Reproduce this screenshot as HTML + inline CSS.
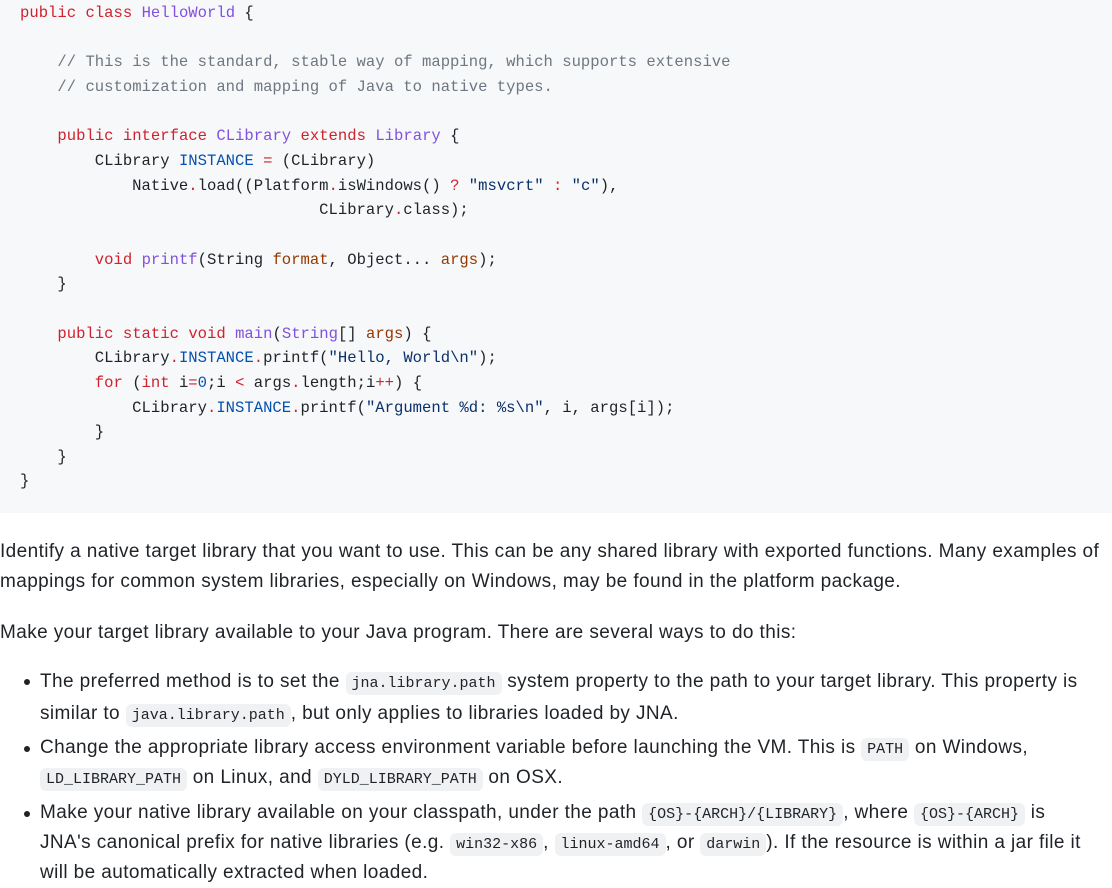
<!DOCTYPE html>
<html><head><meta charset="utf-8"><style>
html,body{margin:0;padding:0;background:#fff;width:1112px;height:887px;overflow:hidden}
body{font-family:"Liberation Sans",sans-serif;color:#1f2328;font-size:19px;letter-spacing:0.4px}
pre{margin:0;background:#f6f8fa;height:513px;padding:1px 0 0 20px;box-sizing:border-box;font-family:"Liberation Mono",monospace;font-size:15.58px;line-height:24.65px;color:#1f2328;letter-spacing:0}
.k{color:#cf222e}.c{color:#6e7781}.e{color:#8250df}.b{color:#0550ae}.o{color:#953800}.s{color:#0a3069}
p{margin:0;line-height:30px;white-space:nowrap}
ul{margin:0;padding:0;list-style:none}
li{position:relative;padding-left:40px;white-space:nowrap;line-height:31px}
li:before{content:"";position:absolute;left:24px;top:13px;width:6px;height:6px;border-radius:50%;background:#1f2328}
code{font-family:"Liberation Mono",monospace;font-size:15px;letter-spacing:0;line-height:1;background:rgba(175,184,193,0.2);border-radius:6px;padding:3px 6px}
</style></head><body>
<pre><span class="k">public</span> <span class="k">class</span> <span class="e">HelloWorld</span> {

    <span class="c">// This is the standard, stable way of mapping, which supports extensive</span>
    <span class="c">// customization and mapping of Java to native types.</span>

    <span class="k">public</span> <span class="k">interface</span> <span class="e">CLibrary</span> <span class="k">extends</span> <span class="e">Library</span> {
        CLibrary <span class="b">INSTANCE</span> <span class="k">=</span> (CLibrary)
            Native<span class="k">.</span>load((Platform<span class="k">.</span>isWindows() <span class="k">?</span> <span class="s">"msvcrt"</span> <span class="k">:</span> <span class="s">"c"</span>),
                                CLibrary<span class="k">.</span>class);

        <span class="k">void</span> <span class="e">printf</span>(String <span class="o">format</span>, Object... <span class="o">args</span>);
    }

    <span class="k">public</span> <span class="k">static</span> <span class="k">void</span> <span class="e">main</span>(<span class="e">String</span>[] <span class="o">args</span>) {
        CLibrary<span class="k">.</span><span class="b">INSTANCE</span><span class="k">.</span>printf(<span class="s">"Hello, World\n"</span>);
        <span class="k">for</span> (<span class="k">int</span> i<span class="k">=</span><span class="b">0</span>;i <span class="k">&lt;</span> args<span class="k">.</span>length;i<span class="k">++</span>) {
            CLibrary<span class="k">.</span><span class="b">INSTANCE</span><span class="k">.</span>printf(<span class="s">"Argument %d: %s\n"</span>, i, args[i]);
        }
    }
}</pre>
<div style="position:absolute;top:537px;left:0;width:1112px">
<p>Identify a native target library that you want to use. This can be any shared library with exported functions. Many examples of<br>mappings for common system libraries, especially on Windows, may be found in the platform package.</p>
<p style="margin-top:21px">Make your target library available to your Java program. There are several ways to do this:</p>
<ul style="margin-top:19px">
<li style="line-height:32px;margin-top:-1px">The preferred method is to set the <code>jna.library.path</code> system property to the path to your target library. This property is<br>similar to <code>java.library.path</code>, but only applies to libraries loaded by JNA.</li>
<li style="line-height:30px;margin-top:3px">Change the appropriate library access environment variable before launching the VM. This is <code>PATH</code> on Windows,<br><code>LD_LIBRARY_PATH</code> on Linux, and <code>DYLD_LIBRARY_PATH</code> on OSX.</li>
<li style="line-height:30px;margin-top:5px">Make your native library available on your classpath, under the path <code>{OS}-{ARCH}/{LIBRARY}</code>, where <code>{OS}-{ARCH}</code> is<br>JNA's canonical prefix for native libraries (e.g. <code>win32-x86</code>, <code>linux-amd64</code>, or <code>darwin</code>). If the resource is within a jar file it<br>will be automatically extracted when loaded.</li>
</ul>
</div>
</body></html>
